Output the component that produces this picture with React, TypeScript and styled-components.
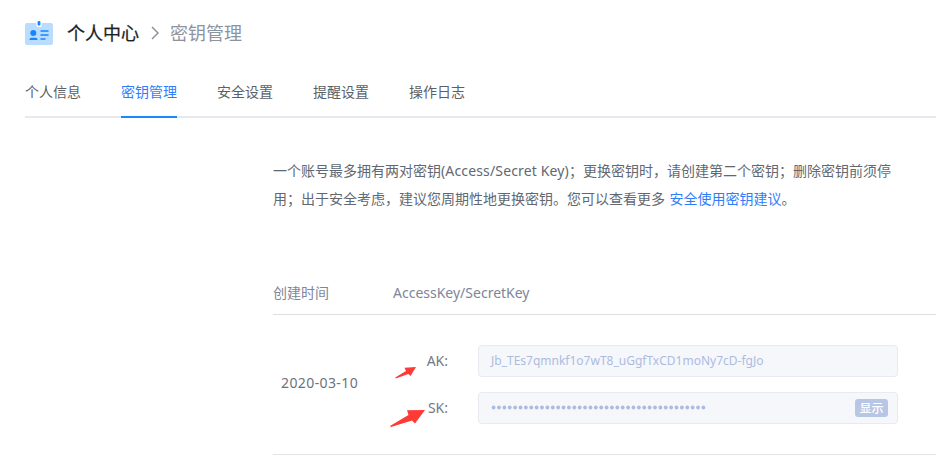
import React from 'react';
import styled, { createGlobalStyle } from 'styled-components';

const Global = createGlobalStyle`
  * { box-sizing: border-box; }
  html, body { margin: 0; background: #fff; }
  body {
    overflow: hidden;
    font: 14px/20px "Noto Sans", "Noto Sans CJK SC", sans-serif;
    color: #595f69;
  }
`;

const Page = styled.main`
  width: 936px;
  height: 456px;
  overflow: hidden;
  padding-left: 25px;
`;

const Header = styled.header`
  display: flex;
  align-items: center;
  height: 64px;
  margin-bottom: 2px;
  font: 18px/26px "Noto Sans CJK SC", sans-serif;
`;

const CardIcon = styled.svg`
  flex: none;
  width: 28px;
  height: 26px;
  margin-right: 14px;
`;

const Title = styled.span`
  width: 73px;
  font-weight: 400;
  color: #1c1f24;
  -webkit-text-stroke: 0.25px #1c1f24;
`;

const Chevron = styled.svg`
  width: 8px;
  height: 14px;
  margin: 2px 11px 0 11px;
`;

const Current = styled.span`
  color: #8d939d;
`;

const Tabs = styled.nav`
  display: flex;
  gap: 40px;
  height: 52px;
  border-bottom: 2px solid #e6e9ee;
`;

const Tab = styled.a<{ $active?: boolean }>`
  height: 52px;
  padding-top: 16px;
  line-height: 20px;
  white-space: nowrap;
  color: ${p => (p.$active ? '#2f7dfb' : '#5b5f66')};
  border-bottom: 2px solid ${p => (p.$active ? '#1a87fb' : 'transparent')};
`;

const Content = styled.section`
  padding: 39px 0 0 248px;
`;

const Notice = styled.p`
  margin: 0;
  height: 56px;
  line-height: 28px;
  white-space: nowrap;
  color: #616872;
`;

const Latin = styled.span<{ $spacing: number }>`
  letter-spacing: ${p => p.$spacing}px;
`;

const Link = styled.a`
  color: #2f7dfb;
  margin-left: 4.5px;
`;

const Table = styled.div`
  margin-top: 58px;
`;

const HeadRow = styled.div`
  display: grid;
  grid-template-columns: 120px 1fr;
  align-items: center;
  height: 44px;
  border-bottom: 1px solid #dcdfe1;
  color: #7e8698;
`;

const BodyRow = styled.div`
  display: grid;
  grid-template-columns: 120px 1fr;
  height: 140px;
  padding-top: 30px;
  border-bottom: 1px solid #e3e5e8;
`;

const DateCell = styled.div`
  padding: 28px 0 0 8px;
  color: #6c727d;
`;

const Keys = styled.div`
  display: flex;
  flex-direction: column;
  gap: 15px;
`;

const KeyRow = styled.div`
  display: flex;
  align-items: center;
  position: relative;
`;

const KeyLabel = styled.label`
  width: 55px;
  margin-right: 30px;
  text-align: right;
  color: #737983;
`;

const Field = styled.div`
  display: flex;
  align-items: center;
  width: 420px;
  height: 32px;
  padding: 0 9px 0 12px;
  border: 1px solid #e7eaf3;
  border-radius: 4px;
  background: #f5f7fb;
  color: #acbcdf;
  font-size: 12px;
  line-height: 18px;
`;

const Dots = styled.svg`
  width: 216px;
  height: 6px;
  fill: #acbcdf;
`;

const ShowButton = styled.button`
  width: 33px;
  height: 18px;
  margin-left: auto;
  padding: 0;
  border: 0;
  border-radius: 3px;
  background: #b8c6e6;
  color: #fff;
  font: 500 12px/18px "Noto Sans CJK SC", sans-serif;
`;

const Arrow = styled.svg<{ $left: number; $top: number; $w: number; $h: number }>`
  position: absolute;
  left: ${p => p.$left}px;
  top: ${p => p.$top}px;
  width: ${p => p.$w}px;
  height: ${p => p.$h}px;
  fill: #fd3a35;
`;

const tabs = ['个人信息', '密钥管理', '安全设置', '提醒设置', '操作日志'];

export default function App() {
  return (
    <>
      <Global />
      <Page>
        <Header>
          <CardIcon viewBox="0 0 28 26">
            <rect y="4" width="28" height="22" rx="2" fill="#b9dcff" />
            <path d="M11.300 4h5.400v1.400a2.700 2.700 0 0 1-5.400 0z" fill="#fff" />
            <rect x="12.6" y="2" width="2.8" height="4.600" rx="1.2" fill="#1687fb" />
            <circle cx="8.3" cy="14" r="3" fill="#1687fb" />
            <path d="M4.500 21c0-1.500.8-2.300 2-2.300h4c1.200 0 2 .8 2 2.300z" fill="#1687fb" />
            <path d="M16 12h7M16 16h7M16 20h4" stroke="#1687fb" strokeWidth="1.500" strokeLinecap="round" />
          </CardIcon>
          <Title>个人中心</Title>
          <Chevron viewBox="0 0 8 14" fill="none" stroke="#858b94" strokeWidth="1.400">
            <path d="M1 1l6 6-6 6" />
          </Chevron>
          <Current>密钥管理</Current>
        </Header>
        <Tabs>
          {tabs.map((t, i) => <Tab key={t} $active={i === 1}>{t}</Tab>)}
        </Tabs>
        <Content>
          <Notice>
            一个账号最多拥有两对密钥<Latin $spacing={0.15}>(Access/Secret Key)</Latin>；更换密钥时，请创建第二个密钥；删除密钥前须停<br />
            用；出于安全考虑，建议您周期性地更换密钥。您可以查看更多<Link>安全使用密钥建议</Link>。
          </Notice>
          <Table>
            <HeadRow>
              <span>创建时间</span>
              <Latin $spacing={0}>AccessKey/SecretKey</Latin>
            </HeadRow>
            <BodyRow>
              <DateCell><Latin $spacing={0.4}>2020-03-10</Latin></DateCell>
              <Keys>
                <KeyRow>
                  <KeyLabel>AK:</KeyLabel>
                  <Field><Latin $spacing={0}>Jb_TEs7qmnkf1o7wT8_uGgfTxCD1moNy7cD-fgJo</Latin></Field>
                  <Arrow $left={2} $top={22} $w={21} $h={12} viewBox="0 0 21 12">
                    <path d="M.3 10.500L11 4 9.500.8 21 0l-5.500 9-2.200-2L.8 11.500z" />
                  </Arrow>
                </KeyRow>
                <KeyRow>
                  <KeyLabel>SK:</KeyLabel>
                  <Field>
                    <Dots viewBox="0 0 216 6">
                      {Array.from({ length: 40 }, (_, i) => <circle key={i} cx={2.600 + i * 5.380} cy="2.500" r="1.900" />)}
                    </Dots>
                    <ShowButton>显示</ShowButton>
                  </Field>
                  <Arrow $left={-3} $top={18} $w={35} $h={17} viewBox="0 0 35 17">
                    <path d="M0 16L18.500 5 17 .3 35 0 25 13.500 22 10.500 1 17z" />
                  </Arrow>
                </KeyRow>
              </Keys>
            </BodyRow>
          </Table>
        </Content>
      </Page>
    </>
  );
}
